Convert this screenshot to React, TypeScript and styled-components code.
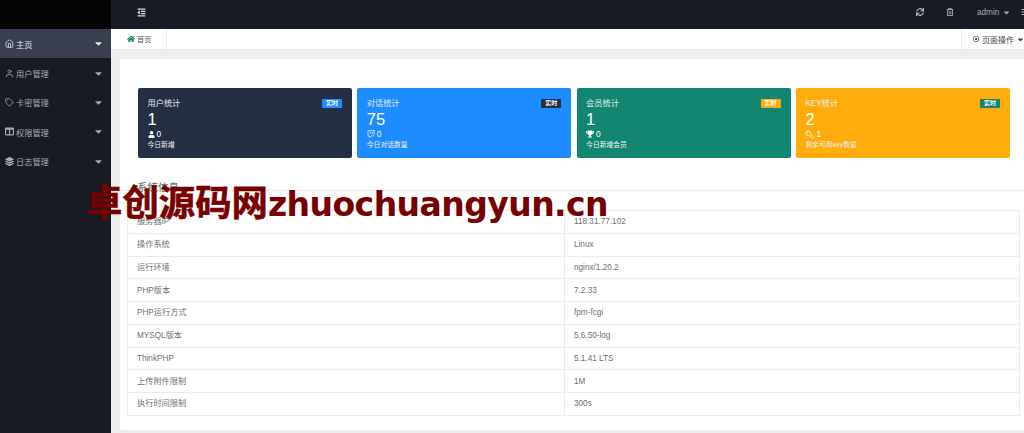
import React from "react";
import styled, { createGlobalStyle } from "styled-components";
import { FaHome, FaUser, FaTrophy, FaCaretDown, FaSync, FaRegTrashAlt, FaRegDotCircle, FaOutdent, FaLayerGroup, FaColumns, FaBars } from "react-icons/fa";
import { FiHome, FiUser, FiTag, FiTwitch } from "react-icons/fi";
import { LuKeyRound } from "react-icons/lu";

const Global = createGlobalStyle`
  html, body { margin: 0; padding: 0; height: 433px; overflow: hidden; background: #eeeeee; }
  * { box-sizing: border-box; }
  body, table { font-family: "Liberation Sans", "Noto Sans CJK SC", sans-serif; font-size: 8.2px; }
`;
const Page = styled.div`position: relative; display: flex; width: 1024px; height: 433px; overflow: hidden;`;
const Sidebar = styled.aside`width: 111px; flex: none; background: #181b24; display: flex; flex-direction: column;`;
const Logo = styled.div`height: 29px; background: #040404;`;
const MenuItem = styled.div<{ $active?: boolean }>`
  height: 29.4px; display: flex; align-items: center; padding: 0 7px 0 5px; gap: 2px;
  background: ${p => (p.$active ? "#3a3f50" : "transparent")};
  color: ${p => (p.$active ? "#e6e8ec" : "#a7aab0")};
  span { flex: 1; }
  svg { flex: none; }
`;
const Main = styled.main`flex: 1; min-width: 0; display: flex; flex-direction: column;`;
const Header = styled.header`height: 29px; background: #181b24; display: flex; align-items: center; color: #a7aab0; padding: 0 0 5px 26px; overflow: hidden;`;
const HeaderSpacer = styled.div`flex: 1;`;
const HeaderIcon = styled.span<{ $w: number }>`width: ${p => p.$w}px; flex: none; display: flex; align-items: center; color: #b5b8bd;`;
const UserMenu = styled.span`display: flex; align-items: center; gap: 3px; width: 44px; flex: none; font-size: 8.2px; color: #a7aab0;`;
const Tabs = styled.nav`height: 21px; background: #fff; border-bottom: 1px solid #e8e8e8; display: flex; align-items: center; color: #555;`;
const HomeTab = styled.div`width: 56px; height: 100%; display: flex; align-items: center; gap: 2px; padding-left: 16px; border-right: 1px solid #eeeeee; font-size: 7.2px; svg { color: #128671; }`;
const PageOps = styled.div`margin-left: auto; width: 63px; flex: none; height: 100%; display: flex; align-items: center; gap: 3px; padding-left: 11px; border-left: 1px solid #eeeeee; white-space: nowrap; color: #444; font-size: 8px;`;
const Content = styled.div`flex: 1; padding: 9px 0 3px 9px; min-height: 0;`;
const Panel = styled.section`height: 100%; background: #fff; border-radius: 3px 0 0 3px; padding: 29px 4px 0 7px;`;
const Stats = styled.div`display: grid; grid-template-columns: repeat(4, 214px); column-gap: 5.3px; margin-left: 11px;`;
const Stat = styled.div<{ $bg: string }>`
  height: 70px; background: ${p => p.$bg}; border-radius: 2px; color: #fff; padding: 11px 9.5px 0;
  position: relative; display: flex; flex-direction: column;
`;
const StatTitle = styled.div`font-size: 8.2px; line-height: 10px; color: #e9ecf0;`;
const Badge = styled.span<{ $bg: string }>`
  position: absolute; top: 11px; right: 10px; width: 20px; height: 9px; border-radius: 1px; background: ${p => p.$bg};
  color: #fff; font-size: 6px; line-height: 9px; text-align: center; font-weight: bold;
`;
const StatValue = styled.div`font-size: 16.5px; line-height: 21px;`;
const StatSub = styled.div`display: flex; align-items: center; gap: 2px; font-size: 8.4px; line-height: 10px; margin-top: -1px;`;
const StatNote = styled.div`font-size: 6.8px; line-height: 9px; margin-top: 1px; color: #eef1f4;`;
const SectionTitle = styled.div`height: 15px; margin: 18px -4px 0 -7px; padding: 4px 0 0 17px; font-size: 10.5px; line-height: 14px; color: #666; border-bottom: 1px solid #ececec;`;
const InfoTable = styled.table`width: 893px; border-collapse: collapse; table-layout: fixed; margin-top: 19px; color: #6f6f6f;`;
const Cell = styled.td`height: 22.75px; padding: 1px 0 0 9px; border: 1px solid #ececec; line-height: 10px;`;
const Watermark = styled.div`
  position: absolute; left: 86px; top: 181px; white-space: nowrap; color: #770000; font-family: "DejaVu Sans", "Noto Sans CJK SC", sans-serif;
  font-weight: bold; font-size: 33px; line-height: 46px; letter-spacing: -0.55px;
`;
const WatermarkHan = styled.span`font-size: 36.4px; letter-spacing: 0; -webkit-text-stroke: 0.6px #770000;`;
const FlippedKey = styled(LuKeyRound)`transform: scaleX(-1);`;

const menu = [
  { icon: <FiHome size={9} />, label: "主页", active: true },
  { icon: <FiUser size={9} />, label: "用户管理" },
  { icon: <FiTag size={9} />, label: "卡密管理" },
  { icon: <FaColumns size={9} />, label: "权限管理" },
  { icon: <FaLayerGroup size={9} />, label: "日志管理" },
];
const stats = [
  { bg: "#252f43", badge: "#1e8bff", title: "用户统计", value: "1", icon: <FaUser size={7} />, sub: "0", note: "今日新增" },
  { bg: "#1e8bff", badge: "#252f43", title: "对话统计", value: "75", icon: <FiTwitch size={8} />, sub: "0", note: "今日对话数量" },
  { bg: "#128671", badge: "#ffac0c", title: "会员统计", value: "1", icon: <FaTrophy size={8} />, sub: "0", note: "今日新增会员" },
  { bg: "#ffac0c", badge: "#128671", title: "KEY统计", value: "2", icon: <FlippedKey size={9} />, sub: "1", note: "剩余可用key数量" },
];
const rows = [
  ["服务器IP", "118.31.77.102"], ["操作系统", "Linux"], ["运行环境", "nginx/1.20.2"], ["PHP版本", "7.2.33"],
  ["PHP运行方式", "fpm-fcgi"], ["MYSQL版本", "5.6.50-log"], ["ThinkPHP", "5.1.41 LTS"], ["上传附件限制", "1M"], ["执行时间限制", "300s"],
];

export default function App() {
  return (
    <Page>
      <Global />
      <Sidebar>
        <Logo />
        {menu.map(m => (
          <MenuItem key={m.label} $active={m.active}>
            {m.icon}<span>{m.label}</span><FaCaretDown size={11} />
          </MenuItem>
        ))}
      </Sidebar>
      <Main>
        <Header>
          <FaOutdent size={9} color="#d8dade" />
          <HeaderSpacer />
          <HeaderIcon $w={30}><FaSync size={8} /></HeaderIcon>
          <HeaderIcon $w={31}><FaRegTrashAlt size={8} /></HeaderIcon>
          <UserMenu>admin <FaCaretDown size={9} /></UserMenu>
          <HeaderIcon $w={3}><FaBars size={8} style={{ flex: "none" }} /></HeaderIcon>
        </Header>
        <Tabs>
          <HomeTab><FaHome size={8} />首页</HomeTab>
          <PageOps><FaRegDotCircle size={8} color="#222" />页面操作<FaCaretDown size={9} /></PageOps>
        </Tabs>
        <Content>
          <Panel>
            <Stats>
              {stats.map(s => (
                <Stat key={s.title} $bg={s.bg}>
                  <StatTitle>{s.title}</StatTitle>
                  <Badge $bg={s.badge}>实时</Badge>
                  <StatValue>{s.value}</StatValue>
                  <StatSub>{s.icon}{s.sub}</StatSub>
                  <StatNote>{s.note}</StatNote>
                </Stat>
              ))}
            </Stats>
            <SectionTitle>系统信息</SectionTitle>
            <InfoTable>
              <colgroup><col style={{ width: 437 }} /><col /></colgroup>
              <tbody>
                {rows.map(r => (
                  <tr key={r[0]}><Cell>{r[0]}</Cell><Cell>{r[1]}</Cell></tr>
                ))}
              </tbody>
            </InfoTable>
          </Panel>
        </Content>
      </Main>
      <Watermark><WatermarkHan>卓创源码网</WatermarkHan>zhuochuangyun.cn</Watermark>
    </Page>
  );
}
